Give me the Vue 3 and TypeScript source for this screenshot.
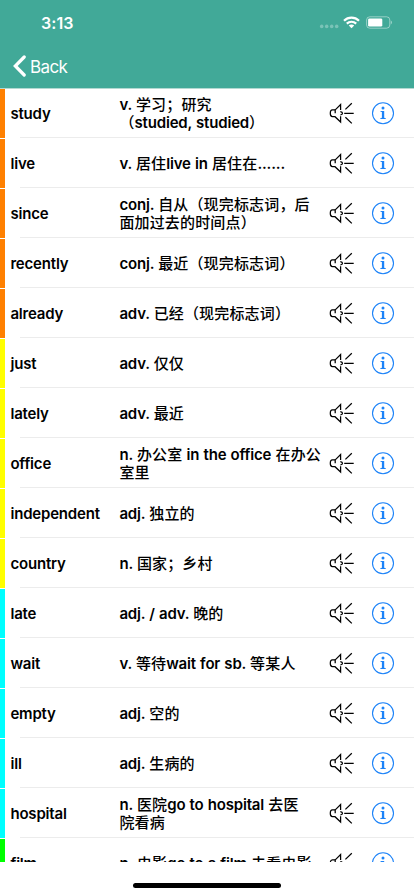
<script setup lang="ts">
interface Entry {
  word: string
  lines: string[]
  level: 'orange' | 'yellow' | 'cyan' | 'green'
}

interface Run {
  text: string
  latin: boolean
}

const entries: Entry[] = [
  { word: 'study', lines: ['v. 学习；研究', '（studied, studied）'], level: 'orange' },
  { word: 'live', lines: ['v. 居住live in 居住在......'], level: 'orange' },
  { word: 'since', lines: ['conj. 自从（现完标志词，后', '面加过去的时间点）'], level: 'orange' },
  { word: 'recently', lines: ['conj. 最近（现完标志词）'], level: 'orange' },
  { word: 'already', lines: ['adv. 已经（现完标志词）'], level: 'orange' },
  { word: 'just', lines: ['adv. 仅仅'], level: 'yellow' },
  { word: 'lately', lines: ['adv. 最近'], level: 'yellow' },
  { word: 'office', lines: ['n. 办公室 in the office 在办公', '室里'], level: 'yellow' },
  { word: 'independent', lines: ['adj. 独立的'], level: 'yellow' },
  { word: 'country', lines: ['n. 国家；乡村'], level: 'yellow' },
  { word: 'late', lines: ['adj. / adv. 晚的'], level: 'cyan' },
  { word: 'wait', lines: ['v. 等待wait for sb. 等某人'], level: 'cyan' },
  { word: 'empty', lines: ['adj. 空的'], level: 'cyan' },
  { word: 'ill', lines: ['adj. 生病的'], level: 'cyan' },
  { word: 'hospital', lines: ['n. 医院go to hospital 去医', '院看病'], level: 'cyan' },
  { word: 'film', lines: ['n. 电影go to a film 去看电影'], level: 'green' },
]

// Latin and Chinese runs use different tracking.
function runs(line: string): Run[] {
  const parts = line.match(/[\x20-\x7e]+|[^\x20-\x7e]+/g) ?? []
  return parts.map((text) => ({ text, latin: /^[\x20-\x7e]/.test(text) }))
}
</script>

<template>
  <div class="screen">
    <header class="header">
      <div class="status">
        <span class="time">3:13</span>
        <div class="indicators">
          <svg class="dots" width="20" height="14" viewBox="0 0 20 14">
            <g fill="#fff" opacity="0.3">
              <circle cx="2.7" cy="9.4" r="1.8" />
              <circle cx="7.7" cy="9.4" r="1.8" />
              <circle cx="12.7" cy="9.4" r="1.8" />
              <circle cx="17.7" cy="9.4" r="1.8" />
            </g>
          </svg>
          <svg class="wifi" width="17" height="13" viewBox="0 0 17 13">
            <g fill="none" stroke="#fff" stroke-width="2.2">
              <path d="M1 4.7C5.2 0.6 11.8 0.6 16 4.7" />
              <path d="M3.8 7.6C6.4 5.1 10.6 5.1 13.2 7.6" />
            </g>
            <path d="M5.8 9.5C7.3 8.1 9.7 8.1 11.2 9.5L8.5 12.2Z" fill="#fff" />
          </svg>
          <svg class="battery" width="27" height="13" viewBox="0 0 27 13">
            <rect x="0.6" y="0.8" width="23.2" height="11.4" rx="3.2" fill="none" stroke="#fff" stroke-opacity="0.45" />
            <rect x="2.1" y="2.4" width="14.2" height="8.2" rx="1.4" fill="#fff" />
            <path d="M24.8 4.6C26.3 5.1 26.3 7.9 24.8 8.4Z" fill="#fff" fill-opacity="0.5" />
          </svg>
        </div>
      </div>
      <nav class="nav">
        <svg width="14" height="22" viewBox="0 0 14 22">
          <path d="M11.2 2L2.3 11L11.2 20" fill="none" stroke="#fff" stroke-width="3.2" stroke-linecap="round" />
        </svg>
        <span class="back">Back</span>
      </nav>
    </header>

    <main class="list">
      <div v-for="entry in entries" :key="entry.word" class="row">
        <div class="bar" :class="entry.level"></div>
        <div class="content">
          <div class="word">{{ entry.word }}</div>
          <div class="meaning">
            <div v-for="line in entry.lines" :key="line" class="line">
              <span v-for="(run, i) in runs(line)" :key="i" :class="run.latin ? 'latin' : 'cjk'">{{ run.text }}</span>
            </div>
          </div>
          <svg class="speaker" width="26" height="24" viewBox="0 0 26 24">
            <g fill="none" stroke="#000" stroke-width="1.25">
              <path d="M6.2 8.9H3.4Q1.3 8.9 1.3 12.3Q1.3 15.7 3.4 15.7H6L11.6 21V15.3" />
              <path d="M6.2 12.3V8.9L11.6 3.6V9.1" />
              <path d="M11.3 10.6Q13.5 10.9 13.5 12.3Q13.5 13.7 11.3 14" />
              <path d="M16.4 8.4L22.8 2.2M15.2 12.4H24.7M16.4 16.2L22.8 22.4" />
            </g>
          </svg>
          <svg class="info" width="24" height="24" viewBox="0 0 24 24">
            <circle cx="12" cy="12.2" r="10.5" fill="none" stroke="#1b82f8" stroke-width="1.1" />
            <circle cx="12" cy="7" r="1.5" fill="#1b82f8" />
            <path d="M9.5 10H13.2V16.8L14.8 17.2V18.1H9.3V17.2L10.9 16.8V11.1L9.5 10.8Z" fill="#1b82f8" />
          </svg>
        </div>
      </div>
    </main>

    <footer class="bottom">
      <div class="home"></div>
    </footer>
  </div>
</template>

<style>
body {
  background: #fff;
}
</style>

<style scoped>
.screen {
  width: 414px;
  height: 896px;
  display: flex;
  flex-direction: column;
  overflow: hidden;
  background: #fff;
  font-family: Inter, "Noto Sans CJK SC", sans-serif;
}
.header {
  height: 88px;
  flex: none;
  background: #41a998;
  color: #fff;
}
.status {
  height: 44px;
  box-sizing: border-box;
  padding: 13px 21px 0 41px;
  display: flex;
  justify-content: space-between;
  align-items: flex-start;
}
.time {
  font-size: 16px;
  line-height: 20px;
  font-weight: 600;
  letter-spacing: 0.1px;
}
.indicators {
  display: flex;
  align-items: center;
  padding-top: 1px;
}
.dots {
  margin-top: 3px;
  margin-right: 4px;
}
.battery {
  margin-left: 6px;
}
.nav {
  height: 44px;
  display: flex;
  align-items: center;
  padding-left: 13px;
  gap: 3px;
}
.back {
  padding-top: 1px;
  font-size: 17px;
  letter-spacing: -0.6px;
}
.list {
  height: 774px;
  flex: none;
  overflow: hidden;
  background: linear-gradient(#b3d9d2, #b3d9d2) 0 0 / 100% 1px no-repeat;
}
.row {
  height: 49.97px;
  display: flex;
}
.bar {
  width: 5.4px;
  flex: none;
  margin-top: 1.2px;
}
.orange {
  background: #ff8000;
}
.yellow {
  background: #ffff00;
}
.cyan {
  background: #00ffff;
}
.green {
  background: #00ff00;
}
.content {
  flex: 1;
  display: flex;
  align-items: center;
  padding-left: 5px;
  background: linear-gradient(#ececec, #ececec) 15px 100% / 100% 1px no-repeat;
  color: #000;
  font-size: 15px;
  font-weight: 600;
  line-height: 18px;
}
.word {
  width: 109px;
  flex: none;
  padding-top: 2.2px;
  letter-spacing: -0.18px;
}
.meaning {
  width: 210px;
  flex: none;
}
.line {
  height: 18px;
  white-space: pre;
}
.latin {
  letter-spacing: -0.18px;
  word-spacing: 0.6px;
}
.cjk {
  font-family: "Noto Sans CJK SC", sans-serif;
  font-weight: 500;
  letter-spacing: 0.16px;
}
.speaker {
  flex: none;
}
.info {
  flex: none;
  margin-left: 15.7px;
}
.bottom {
  flex: 1;
  display: flex;
  justify-content: center;
  align-items: flex-start;
  padding-top: 20.5px;
}
.home {
  width: 148px;
  height: 5px;
  border-radius: 3px;
  background: #000;
}
</style>
